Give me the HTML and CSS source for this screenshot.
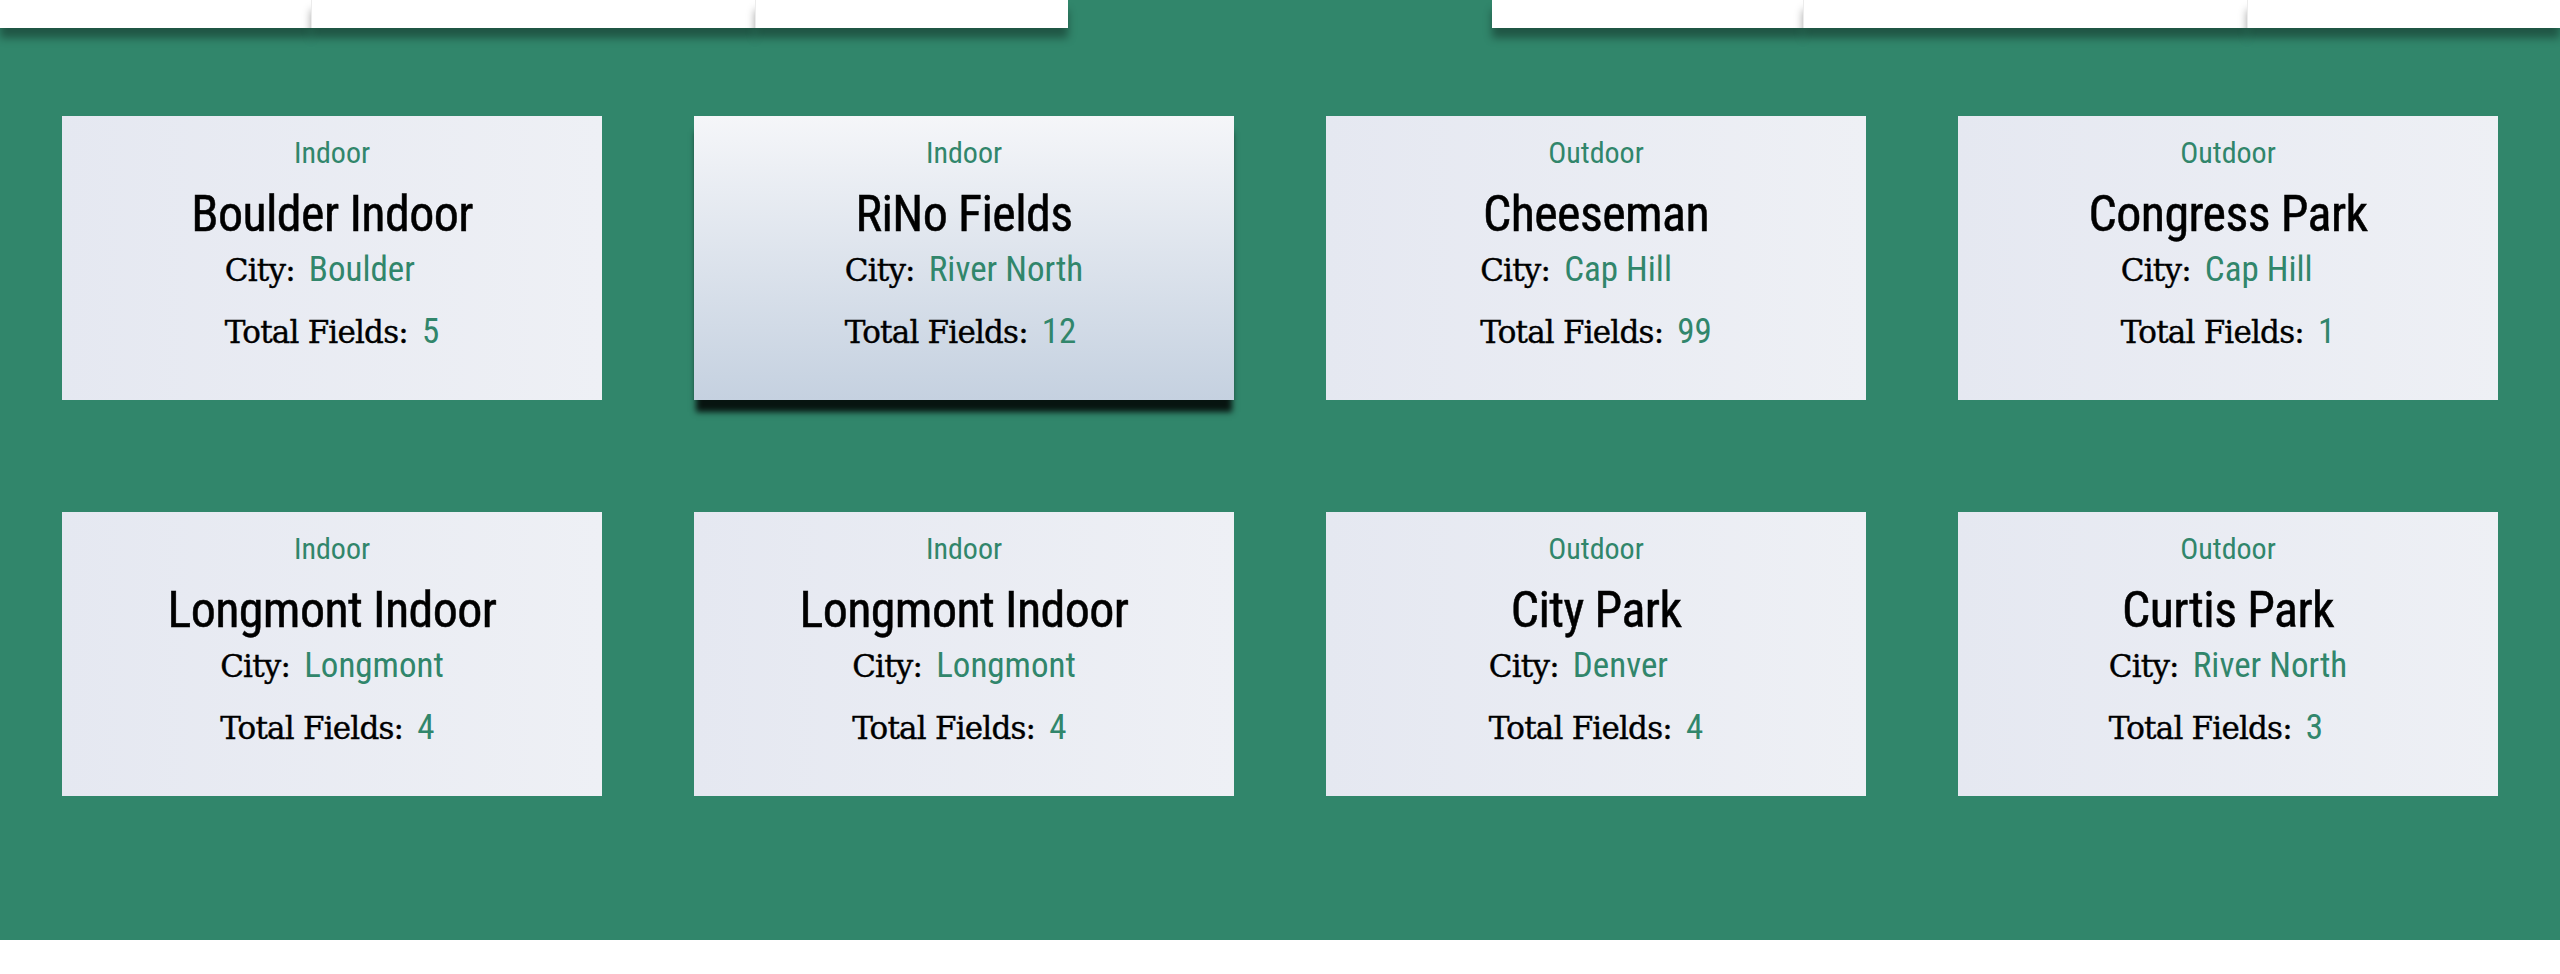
FILE: index.html
```html
<!DOCTYPE html>
<html lang="en">
<head>
<meta charset="utf-8">
<title>Fields</title>
<link rel="stylesheet" href="styles.css">
</head>
<body>
<section class="stage">
  <nav class="nav">
    <div class="nav-group">
      <a class="nav-cell w1"></a>
      <a class="nav-cell w2"></a>
      <a class="nav-cell w3"></a>
    </div>
    <div class="nav-gap"></div>
    <div class="nav-group">
      <a class="nav-cell w1"></a>
      <a class="nav-cell w2"></a>
      <a class="nav-cell w3"></a>
    </div>
  </nav>

  <div class="grid">
    <div class="card">
      <div class="type">Indoor</div>
      <div class="title">Boulder Indoor</div>
      <div class="info">
        <div class="row"><span class="label">City:</span><span class="value">Boulder</span></div>
        <div class="row row2"><span class="label">Total Fields:</span><span class="value">5</span></div>
      </div>
    </div>
    <div class="card active">
      <div class="type">Indoor</div>
      <div class="title">RiNo Fields</div>
      <div class="info">
        <div class="row"><span class="label">City:</span><span class="value">River North</span></div>
        <div class="row row2"><span class="label">Total Fields:</span><span class="value">12</span></div>
      </div>
    </div>
    <div class="card">
      <div class="type">Outdoor</div>
      <div class="title">Cheeseman</div>
      <div class="info">
        <div class="row"><span class="label">City:</span><span class="value">Cap Hill</span></div>
        <div class="row row2"><span class="label">Total Fields:</span><span class="value">99</span></div>
      </div>
    </div>
    <div class="card">
      <div class="type">Outdoor</div>
      <div class="title">Congress Park</div>
      <div class="info">
        <div class="row"><span class="label">City:</span><span class="value">Cap Hill</span></div>
        <div class="row row2"><span class="label">Total Fields:</span><span class="value">1</span></div>
      </div>
    </div>
    <div class="card">
      <div class="type">Indoor</div>
      <div class="title">Longmont Indoor</div>
      <div class="info">
        <div class="row"><span class="label">City:</span><span class="value">Longmont</span></div>
        <div class="row row2"><span class="label">Total Fields:</span><span class="value">4</span></div>
      </div>
    </div>
    <div class="card">
      <div class="type">Indoor</div>
      <div class="title">Longmont Indoor</div>
      <div class="info">
        <div class="row"><span class="label">City:</span><span class="value">Longmont</span></div>
        <div class="row row2"><span class="label">Total Fields:</span><span class="value">4</span></div>
      </div>
    </div>
    <div class="card">
      <div class="type">Outdoor</div>
      <div class="title">City Park</div>
      <div class="info">
        <div class="row"><span class="label">City:</span><span class="value">Denver</span></div>
        <div class="row row2"><span class="label">Total Fields:</span><span class="value">4</span></div>
      </div>
    </div>
    <div class="card">
      <div class="type">Outdoor</div>
      <div class="title">Curtis Park</div>
      <div class="info">
        <div class="row"><span class="label">City:</span><span class="value">River North</span></div>
        <div class="row row2"><span class="label">Total Fields:</span><span class="value">3</span></div>
      </div>
    </div>
  </div>
</section>
</body>
</html>
```

FILE: styles.css
```css
html, body {
  margin: 0;
  padding: 0;
  background: #ffffff;
}

.stage {
  background: #31866b;
  height: 940px;
  box-sizing: border-box;
}

.nav {
  display: flex;
  height: 28px;
}

.nav-group {
  display: flex;
  width: 1068px;
}

.nav-gap {
  flex: 1;
}

.nav-cell {
  display: block;
  height: 28px;
  background: #ffffff;
  box-shadow: 0 10px 9px rgba(0, 0, 0, 0.36);
}

.nav-cell + .nav-cell {
  border-left: 1px solid #ececec;
}

.w1 { width: 311px; }
.w2 { width: 443px; }
.w3 { width: 312px; }

.grid {
  display: grid;
  grid-template-columns: repeat(4, 540px);
  column-gap: 92px;
  row-gap: 112px;
  padding: 88px 62px 0;
}

.card {
  height: 284px;
  box-sizing: border-box;
  padding-top: 19px;
  text-align: center;
  background: linear-gradient(90deg, #e5e8f1 0%, #eef0f5 100%);
  font-family: "Liberation Sans Narrow", "Roboto Condensed", "DejaVu Sans Condensed", Roboto, sans-serif;
}

.card.active {
  background: linear-gradient(180deg, #f5f6f9 0%, #c5d1e0 100%);
  box-shadow: 0 14px 6px -2px rgba(0, 0, 0, 0.85);
}

.type {
  font-size: 30px;
  line-height: 36px;
  color: #31866b;
}

.title {
  margin-top: 15px;
  font-size: 50px;
  line-height: 57px;
  letter-spacing: -0.6px;
  color: #000000;
  -webkit-text-stroke: 0.5px #000000;
}

.info {
  display: inline-block;
  text-align: left;
  margin-top: 5px;
}

.row {
  line-height: 44px;
  white-space: nowrap;
}

.row2 {
  margin-top: 12px;
}

.label {
  font-family: "DejaVu Serif", "Liberation Serif", serif;
  font-size: 31px;
  letter-spacing: -0.8px;
  color: #000000;
  -webkit-text-stroke: 0.4px #000000;
}

.value {
  margin-left: 14px;
  font-size: 35px;
  color: #31866b;
}
```
